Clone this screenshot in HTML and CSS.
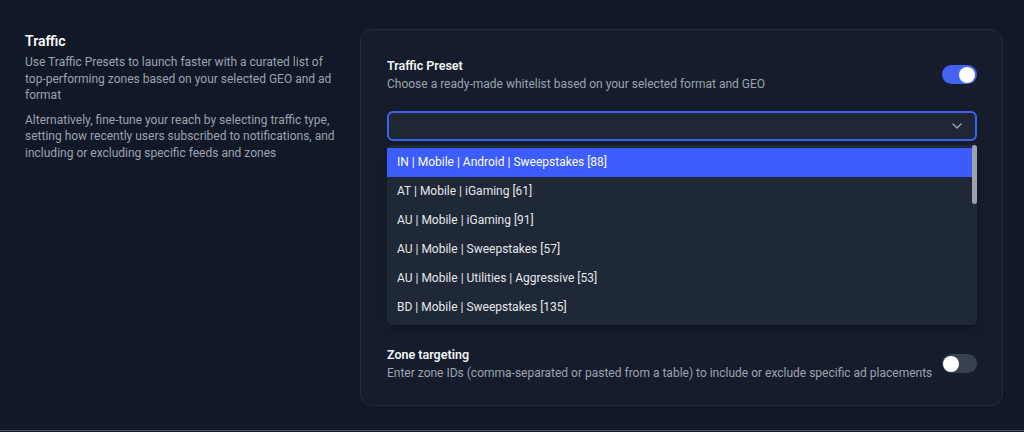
FILE: index.html
```html
<!DOCTYPE html>
<html lang="en">
<head>
    <meta charset="UTF-8">
    <meta name="viewport" content="width=device-width, initial-scale=1.0">
    <title>Traffic settings</title>
    <link rel="stylesheet" href="styles.css">
</head>
<body>
    <div class="page">
        <section class="settings">
            <div class="intro">
                <h2>Traffic</h2>
                <p>Use Traffic Presets to launch faster with a curated list of top-performing zones based on your selected GEO and ad format</p>
                <p>Alternatively, fine-tune your reach by selecting traffic type, setting how recently users subscribed to notifications, and including or excluding specific feeds and zones</p>
            </div>

            <div class="card">
                <div class="field">
                    <div class="field-text">
                        <h3>Traffic Preset</h3>
                        <p>Choose a ready-made whitelist based on your selected format and GEO</p>
                    </div>
                    <span class="toggle on"><span class="knob"></span></span>
                </div>

                <div class="select">
                    <svg class="chevron" width="10" height="6" viewBox="0 0 10 6">
                        <path d="M1 1l4 4 4-4" fill="none" stroke="#9ca3af" stroke-width="1.4" stroke-linecap="round" stroke-linejoin="round"/>
                    </svg>
                </div>

                <ul class="options">
                    <li class="active">IN | Mobile | Android | Sweepstakes [88]</li>
                    <li>AT | Mobile | iGaming [61]</li>
                    <li>AU | Mobile | iGaming [91]</li>
                    <li>AU | Mobile | Sweepstakes [57]</li>
                    <li>AU | Mobile | Utilities | Aggressive [53]</li>
                    <li>BD | Mobile | Sweepstakes [135]</li>
                    <span class="scroll-thumb"></span>
                </ul>

                <div class="field zone">
                    <div class="field-text">
                        <h3>Zone targeting</h3>
                        <p>Enter zone IDs (comma-separated or pasted from a table) to include or exclude specific ad placements</p>
                    </div>
                    <span class="toggle"><span class="knob"></span></span>
                </div>
            </div>
        </section>
    </div>
</body>
</html>
```

FILE: styles.css
```css
body {
    margin: 0;
    background-color: #111827;
    font-family: Roboto, "Noto Sans", Arial, sans-serif;
    color: #f3f4f6;
}
.page {
    height: 431px;
    border-bottom: 1px solid #4b5563;
    box-sizing: border-box;
    overflow: hidden;
}
.settings {
    display: grid;
    grid-template-columns: 315px 1fr;
    gap: 20px;
    padding: 29px 21px 0 25px;
}
.intro {
    padding-top: 2px;
}
.intro h2 {
    margin: 0;
    font-size: 14px;
    line-height: 20px;
    font-weight: 600;
    color: #f9fafb;
}
.intro p {
    margin: 3px 0 8px;
    font-size: 12px;
    line-height: 16.5px;
    color: #9ca3af;
}
.card {
    background-color: #151d2c;
    border: 1px solid #232c3b;
    border-radius: 12px;
    padding: 27px 25px 24px 26px;
}
.field {
    display: flex;
    align-items: center;
    justify-content: space-between;
    gap: 8px;
}
.field h3 {
    margin: 0;
    font-size: 12.5px;
    line-height: 17px;
    font-weight: 600;
    color: #f3f4f6;
}
.field p {
    margin: 2px 0 0;
    font-size: 12px;
    line-height: 16px;
    color: #9ca3af;
}
.toggle {
    flex: none;
    width: 35px;
    height: 19px;
    border-radius: 10px;
    background-color: #374151;
    position: relative;
}
.toggle .knob {
    position: absolute;
    top: 1.5px;
    left: 1px;
    width: 16px;
    height: 16px;
    border-radius: 50%;
    background-color: #fff;
}
.toggle.on {
    background-color: #4264f0;
}
.toggle.on .knob {
    left: 17px;
}
.select {
    margin-top: 19px;
    height: 30px;
    box-sizing: border-box;
    border: 2px solid #3d62f0;
    border-radius: 6px;
    background-color: #1f2735;
    display: flex;
    align-items: center;
    justify-content: flex-end;
    padding-right: 13px;
}
.options {
    list-style: none;
    margin: 4px 0 0;
    padding: 3px 5px 3px 0;
    background-color: #1f2836;
    border-radius: 5px;
    position: relative;
    box-shadow: 0 4px 10px rgba(0, 0, 0, 0.25);
}
.options li {
    height: 29px;
    line-height: 29px;
    padding-left: 10px;
    font-size: 12px;
    color: #e5e7eb;
}
.options li.active {
    background-color: #3c5cfb;
    color: #fff;
}
.scroll-thumb {
    position: absolute;
    right: 0;
    top: 0;
    width: 5px;
    height: 59px;
    border-radius: 3px;
    background-color: #9ca3af;
}
.zone {
    margin-top: 21px;
}
```
